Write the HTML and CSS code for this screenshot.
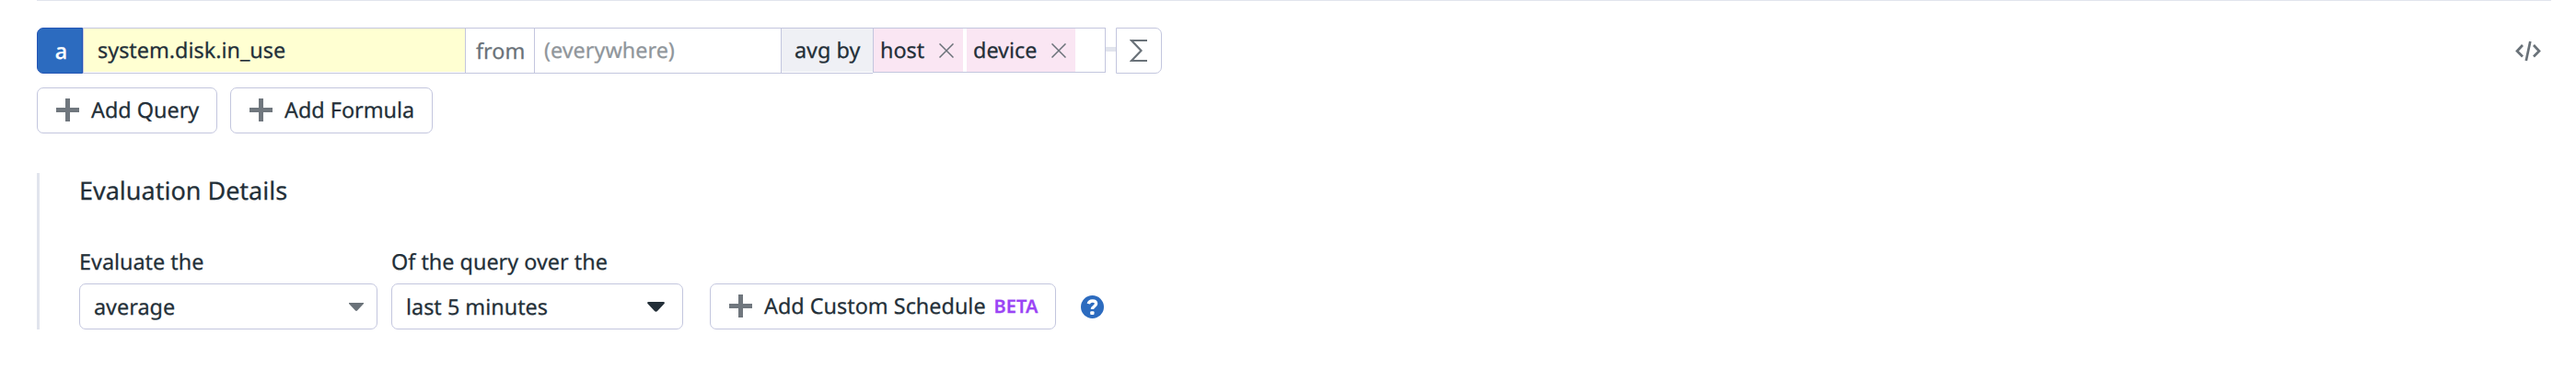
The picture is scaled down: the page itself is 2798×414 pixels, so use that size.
FILE: index.html
```
<!DOCTYPE html>
<html lang="en">
<head>
<meta charset="utf-8">
<title>Query editor</title>
<link rel="stylesheet" href="styles.css">
</head>
<body>
<main class="editor">
  <div class="query-row">
    <div class="query-name">a</div>
    <div class="metric"><span class="raise">system.disk.in_use</span></div>
    <div class="from">from</div>
    <div class="scope"><span class="raise">(everywhere)</span></div>
    <div class="aggregator"><span class="raise">avg by</span></div>
    <div class="groups">
      <div class="tag host"><span class="raise">host</span><svg class="close" viewBox="0 0 16 16"><path d="M.5.5l15 15M15.5.5l-15 15"/></svg></div>
      <div class="tag device"><span class="raise">device</span><svg class="close" viewBox="0 0 16 16"><path d="M.5.5l15 15M15.5.5l-15 15"/></svg></div>
    </div>
    <div class="connector"></div>
    <div class="sigma"><svg width="20" height="26" viewBox="0 0 20 26"><path d="M19 2H2l10.500 11L2 24h17"/></svg></div>
    <svg class="code" width="28" height="23" viewBox="0 0 28 23"><path d="M8 5L2 11.500 8 17.500M20 5l6 6.500-6 6M16.300 1l-4.500 21"/></svg>
  </div>
  <div class="actions">
    <div class="button query"><svg class="plus" viewBox="0 0 25 25"><path d="M12.500 0v25M0 12.500h25"/></svg><span class="raise">Add Query</span></div>
    <div class="button formula"><svg class="plus" viewBox="0 0 25 25"><path d="M12.500 0v25M0 12.500h25"/></svg><span class="raise">Add Formula</span></div>
  </div>
  <section class="details">
    <h2 class="heading">Evaluation Details</h2>
    <div class="fields">
      <div class="field average">
        <div class="label">Evaluate the</div>
        <div class="select"><span>average</span><svg class="caret" width="16" height="9" viewBox="0 0 16 9"><path d="M0 0h16v1L9 8.500q-1 .8-2 0L0 1z"/></svg></div>
      </div>
      <div class="field window">
        <div class="label">Of the query over the</div>
        <div class="select"><span>last 5 minutes</span><svg class="caret" width="19" height="11" viewBox="0 0 19 11"><path d="M1 0h17q1.500.5.500 2l-7.500 8q-1.500 1.300-3 0L.5 2Q-.5.5 1 0z"/></svg></div>
      </div>
      <div class="button schedule"><svg class="plus" viewBox="0 0 25 25"><path d="M12.500 0v25M0 12.500h25"/></svg><span class="raise">Add Custom Schedule</span><span class="beta">BETA</span></div>
      <div class="help"><svg width="25" height="25" viewBox="0 0 25 25"><circle cx="12.500" cy="12.500" r="12.500"/><path d="M8.300 9.200C8.800 7 10.300 6 12.600 6c2.400 0 4 1.200 4 3.100 0 2.900-4.200 2.600-4.200 6"/><rect x="10.200" y="17.200" width="4.300" height="3.800" rx="1"/></svg></div>
    </div>
  </section>
</main>
</body>
</html>
```
FILE: styles.css
```
* { box-sizing: border-box; }
body {
  margin: 0;
  background: #fff;
  color: #232f38;
  font: 23.4px/32px "Noto Sans", sans-serif;
  text-rendering: geometricPrecision;
  -webkit-text-stroke: .25px;
  white-space: nowrap;
}
svg { display: block; flex: none; }
.editor { margin: 0 27px 0 40px; border-top: 1px solid #e1e4ed; }
.raise { margin-bottom: 2px; }
.query-row { display: flex; height: 50px; margin-top: 29px; }
.query-row > div { display: flex; align-items: center; flex: none; }
.query-name {
  width: 50px;
  justify-content: center;
  padding-left: 3px;
  border: 1px solid #2455b5;
  border-radius: 7px 0 0 7px;
  background: #2c6bbf;
  color: #fff;
  font-weight: 500;
}
.metric, .from, .scope, .aggregator {
  border: 1px solid #c3c6de;
  border-right: 0;
}
.metric {
  width: 415px;
  padding: 0 0 0 15px;
  background: linear-gradient(#ffffd2, #ffffd2) 0 0 / 100% 47px no-repeat;
}
.from { width: 75px; padding-left: 11px; color: #6a7279; }
.scope { width: 268px; padding-left: 10px; color: #90969b; }
.aggregator {
  width: 100px;
  padding-left: 14px;
  background: linear-gradient(#eff0f5, #eff0f5) 0 0 / 100% 47px no-repeat;
}
.groups { width: 253px; height: 49px; gap: 4px; border: 1px solid #c3c6de; }
.tag {
  display: flex;
  align-items: center;
  justify-content: space-between;
  height: 47px;
  background: #fae6f3;
}
.host { width: 97px; padding: 0 10px 0 7px; }
.device { width: 118px; padding: 0 10px 0 7px; }
.close { width: 16px; height: 16px; fill: none; stroke: #6a7279; stroke-width: 1.5; }
.connector { width: 11px; height: 5px; margin-top: 21px; background: #e1e4ed; }
.sigma {
  width: 50px;
  justify-content: center;
  border: 1px solid #c3c6de;
  border-radius: 0 7px 7px 0;
}
.sigma svg { fill: none; stroke: #6a7279; stroke-width: 2.2; }
.code { margin: 14px 11px 0 auto; fill: none; stroke: #6a7279; stroke-width: 2.7; }
.actions { display: flex; gap: 14px; margin-top: 15px; }
.button {
  display: flex;
  align-items: center;
  flex: none;
  height: 50px;
  padding-left: 20px;
  border: 1px solid #c3c6de;
  border-radius: 7px;
}
.query { width: 196px; }
.formula { width: 220px; }
.plus { width: 25px; height: 25px; margin: 0 13px 2px 0; stroke: #70777e; stroke-width: 5; }
.details { height: 170px; margin-top: 43px; padding-left: 43px; border-left: 3px solid #e1e4ed; }
.heading { margin: 0; font: 400 27px/38px "Noto Sans", sans-serif; }
.fields { display: flex; align-items: flex-end; margin-top: 42px; }
.label { height: 40px; }
.select {
  display: flex;
  align-items: center;
  justify-content: space-between;
  height: 50px;
  border: 1px solid #c3c6de;
  border-radius: 7px;
}
.average { width: 324px; }
.average .select { padding: 0 14px 0 15px; }
.average .caret { fill: #6a7279; }
.window { width: 317px; margin-left: 15px; }
.window .select { padding: 0 19px 0 15px; }
.window .caret { fill: #232f38; }
.schedule { width: 376px; margin-left: 29px; }
.beta { margin-left: 9px; color: #9b44f5; font-size: 20px; font-weight: 600; }
.help { display: flex; align-items: center; height: 50px; margin-left: 27px; }
.help circle { fill: #2c6bbf; }
.help path { fill: none; stroke: #fff; stroke-width: 3.4; }
.help rect { fill: #fff; }
```
